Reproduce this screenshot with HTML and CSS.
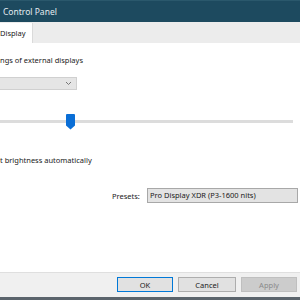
FILE: index.html
```html
<!DOCTYPE html>
<html lang="en">
<head>
    <meta charset="UTF-8">
    <title>Control Panel</title>
    <link rel="stylesheet" href="styles.css">
</head>
<body>
    <div class="window">
        <div class="titlebar">Control Panel</div>

        <div class="tabs">
            <div class="tab">Display</div>
        </div>

        <div class="content">
            <div class="note">ngs of external displays</div>

            <div class="select">
                <svg class="chevron" width="7" height="5" viewBox="0 0 7 5">
                    <polyline points="1,1 3.5,3.5 6,1" fill="none" stroke="#777" stroke-width="1"/>
                </svg>
            </div>

            <div class="slider">
                <div class="track"></div>
                <svg class="thumb" width="9" height="16" viewBox="0 0 9 16">
                    <path d="M1 0 H8 A1 1 0 0 1 9 1 V11.5 L4.5 15.5 L0 11.5 V1 A1 1 0 0 1 1 0 Z" fill="#0a6ed6"/>
                </svg>
            </div>

            <div class="note auto">t brightness automatically</div>

            <div class="presets">
                <span class="presets-label">Presets:</span>
                <div class="presets-box">Pro Display XDR (P3-1600 nits)</div>
            </div>
        </div>

        <div class="footer">
            <button class="btn default">OK</button>
            <button class="btn">Cancel</button>
            <button class="btn disabled">Apply</button>
        </div>
        <div class="edge"></div>
    </div>
</body>
</html>
```

FILE: styles.css
```css
* {
    margin: 0;
    padding: 0;
    box-sizing: border-box;
}
body {
    font-family: 'Noto Sans', 'Open Sans', sans-serif;
    font-size: 7.5px;
    color: #1a1a1a;
    background: #fff;
    width: 300px;
    height: 300px;
    overflow: hidden;
}
.window {
    display: flex;
    flex-direction: column;
    height: 300px;
}
.titlebar {
    height: 22px;
    background: #1d4a5f;
    color: #e4ecf0;
    font-size: 8.5px;
    line-height: 22px;
    padding-left: 3px;
    border-top: 1px solid #2a586c;
}
.tabs {
    height: 21px;
    background: #ececec;
    display: flex;
    align-items: flex-end;
}
.tab {
    height: 20px;
    background: #fff;
    line-height: 20px;
    padding-right: 6px;
    border-right: 1px solid #dadada;
}
.content {
    flex: 1;
    display: flex;
    flex-direction: column;
}
.note {
    line-height: 14px;
    margin-top: 10px;
}
.select {
    margin-top: 10px;
    width: 77px;
    height: 13px;
    background: #e5e5e5;
    border: 1px solid #d0d0d0;
    border-left: none;
    display: flex;
    align-items: center;
    justify-content: flex-end;
    padding-right: 4px;
}
.slider {
    margin-top: 24px;
    height: 16px;
    position: relative;
}
.track {
    position: absolute;
    left: 0;
    top: 6px;
    width: 293px;
    height: 3px;
    background: #dcdcdc;
}
.thumb {
    position: absolute;
    left: 66px;
    top: 0;
}
.auto {
    margin-top: 23px;
}
.presets {
    margin-top: 21px;
    display: flex;
    align-items: center;
    padding: 0 2px 0 112px;
}
.presets-label {
    flex: none;
    width: 35px;
}
.presets-box {
    flex: 1;
    height: 15px;
    line-height: 13px;
    background: #e3e3e3;
    border: 1px solid #a8a8a8;
    padding-left: 2px;
}
.footer {
    height: 25px;
    background: #f0f0f0;
    border-top: 1px solid #dfdfdf;
    display: flex;
    justify-content: flex-end;
    gap: 5px;
    padding: 4px 3px 0 0;
}
.btn {
    width: 56px;
    height: 15px;
    font-family: inherit;
    font-size: 7.5px;
    color: #1a1a1a;
    background: #e1e1e1;
    border: 1px solid #adadad;
}
.btn.default {
    border-color: #0078d7;
}
.btn + .btn {
    width: 58px;
}
.btn.disabled {
    width: 56px;
    background: #cccccc;
    border-color: #bfbfbf;
    color: #8a8a8a;
}
.edge {
    height: 3px;
    background: #5b646c;
}
```
